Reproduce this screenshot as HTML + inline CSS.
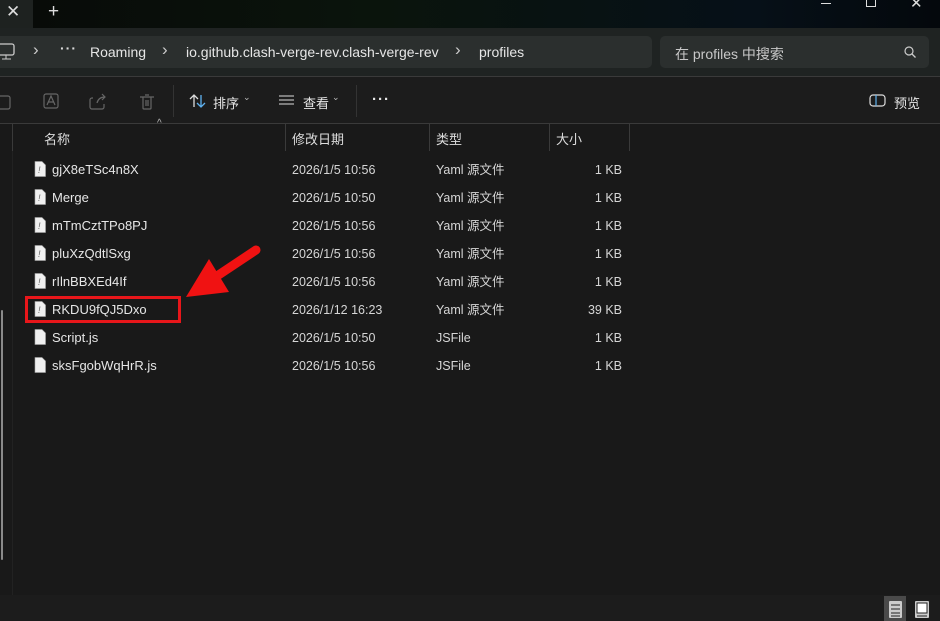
<!DOCTYPE html>
<html><head><meta charset="utf-8"><style>
*{margin:0;padding:0;box-sizing:border-box}
body{width:940px;height:621px;overflow:hidden;background:#191919;font-family:"Liberation Sans","Noto Sans CJK SC",sans-serif;color:#e6e6e6;position:relative;font-size:13px}
.abs{position:absolute}
.t{position:absolute;white-space:nowrap}
.ch{position:absolute;color:#ccc;font-size:17px;top:40px}
</style></head><body>
<!-- title bar -->
<div class="abs" style="left:0;top:0;width:940px;height:28px;background:linear-gradient(90deg,#080a08,#0a140c 40%,#061018 80%,#04080c)"></div>
<div class="abs" style="left:0;top:0;width:33px;height:28px;background:#1e2220"></div>
<div class="t" style="left:6px;top:2px;font-size:17px;color:#ddd">✕</div>
<div class="t" style="left:48px;top:1px;font-size:19px;color:#ddd">+</div>
<div class="abs" style="left:821px;top:3px;width:10px;height:1px;background:#ddd"></div>
<div class="abs" style="left:866px;top:0;width:10px;height:7px;border:1px solid #ddd;border-top:none"></div>
<div class="t" style="left:910px;top:-6px;font-size:15px;color:#ddd">✕</div>
<!-- address row -->
<div class="abs" style="left:0;top:28px;width:940px;height:48px;background:#1f2322"></div>
<div class="abs" style="left:0;top:36px;width:652px;height:32px;background:#2b2f2e;border-radius:0 5px 5px 0"></div>
<div class="abs" style="left:660px;top:36px;width:269px;height:32px;background:#2b2f2e;border-radius:5px"></div>
<svg class="abs" style="left:0;top:43px" width="16" height="18"><rect x="-3" y="1" width="17" height="11" rx="2" fill="none" stroke="#ccc" stroke-width="1.3"/><path d="M2 16h9M6 12v4" stroke="#ccc"/></svg>
<div class="ch" style="left:33px">›</div>
<div class="t" style="left:60px;top:40px;color:#ddd;font-size:14px;font-weight:bold;letter-spacing:1px">···</div>
<div class="t" style="left:90px;top:44px;font-size:14px">Roaming</div>
<div class="ch" style="left:162px">›</div>
<div class="t" style="left:186px;top:44px;font-size:14px">io.github.clash-verge-rev.clash-verge-rev</div>
<div class="ch" style="left:455px">›</div>
<div class="t" style="left:479px;top:44px;font-size:14px">profiles</div>
<div class="t" style="left:675px;top:44px;font-size:14px;color:#c8c8c8">在 profiles 中搜索</div>
<svg class="abs" style="left:903px;top:45px" width="14" height="14"><circle cx="6" cy="6" r="4" fill="none" stroke="#ccc" stroke-width="1.2"/><path d="M9 9l3.5 3.5" stroke="#ccc" stroke-width="1.3"/></svg>
<div class="abs" style="left:0;top:76px;width:940px;height:1px;background:#3a3a3a"></div>
<!-- toolbar -->
<div class="abs" style="left:0;top:77px;width:940px;height:46px;background:#1c1c1c"></div>
<svg class="abs" style="left:0;top:90px" width="170" height="22" stroke="#666" fill="none" stroke-width="1.2">
<rect x="-4" y="6" width="14" height="13" rx="2"/>
<rect x="44" y="4" width="14" height="14" rx="2"/><path d="M47 15l4-9 4 9M48 12h6"/>
<path d="M93 8h-1a2 2 0 0 0-2 2v7a2 2 0 0 0 2 2h10a2 2 0 0 0 2-2v-3M97 13c1-4 4-6 8-6M102 4l3 3-3 3"/>
<path d="M140 7h14M143 7v11a1 1 0 0 0 1 1h6a1 1 0 0 0 1-1V7M145 5h4M146 10v6M148 10v6"/>
</svg>
<div class="abs" style="left:173px;top:85px;width:1px;height:32px;background:#333"></div>
<svg class="abs" style="left:189px;top:92px" width="18" height="18" fill="none" stroke-width="1.3"><path d="M5 15V3M1 7l4-4 4 4" stroke="#ddd"/><path d="M12 3v12M8 11l4 4 4-4" stroke="#5fb2f0"/></svg>
<div class="t" style="left:213px;top:93px;font-size:13px">排序</div>
<div class="t" style="left:243px;top:92px;font-size:9px;color:#bbb">⌄</div>
<svg class="abs" style="left:278px;top:94px" width="18" height="14" stroke="#ddd"><path d="M1 2h15M1 6h15M1 10h15"/></svg>
<div class="t" style="left:303px;top:93px;font-size:13px">查看</div>
<div class="t" style="left:332px;top:92px;font-size:9px;color:#bbb">⌄</div>
<div class="abs" style="left:356px;top:85px;width:1px;height:32px;background:#333"></div>
<div class="t" style="left:372px;top:91px;font-size:15px;font-weight:bold;letter-spacing:1px">···</div>
<svg class="abs" style="left:869px;top:94px" width="18" height="14" fill="none" stroke="#ddd" stroke-width="1.2"><rect x="1" y="1" width="15" height="11" rx="3"/><path d="M7 1v11" stroke="#5fb2f0"/></svg>
<div class="t" style="left:894px;top:93px;font-size:13px">预览</div>
<div class="abs" style="left:0;top:123px;width:940px;height:1px;background:#3a3a3a"></div>
<!-- headers -->
<div class="abs" style="left:12px;top:124px;width:1px;height:27px;background:#3a3a3a"></div>
<div class="abs" style="left:285px;top:124px;width:1px;height:27px;background:#3a3a3a"></div>
<div class="abs" style="left:429px;top:124px;width:1px;height:27px;background:#3a3a3a"></div>
<div class="abs" style="left:549px;top:124px;width:1px;height:27px;background:#3a3a3a"></div>
<div class="abs" style="left:629px;top:124px;width:1px;height:27px;background:#3a3a3a"></div>
<div class="t" style="left:157px;top:118px;font-size:10px;color:#bbb">^</div>
<div class="t" style="left:44px;top:129px;font-size:13px;color:#ddd">名称</div>
<div class="t" style="left:292px;top:129px;font-size:13px;color:#ddd">修改日期</div>
<div class="t" style="left:436px;top:129px;font-size:13px;color:#ddd">类型</div>
<div class="t" style="left:556px;top:129px;font-size:13px;color:#ddd">大小</div>
<div class="abs" style="left:12px;top:151px;width:1px;height:444px;background:#222"></div>
<div class="abs" style="left:1px;top:310px;width:2px;height:250px;background:#8a8a8a;border-radius:1px"></div>
<!-- rows -->
<div id="rows"></div>
<script>
var r=[["gjX8eTSc4n8X","2026/1/5 10:56","Yaml 源文件","1 KB",1],["Merge","2026/1/5 10:50","Yaml 源文件","1 KB",1],["mTmCztTPo8PJ","2026/1/5 10:56","Yaml 源文件","1 KB",1],["pluXzQdtlSxg","2026/1/5 10:56","Yaml 源文件","1 KB",1],["rIlnBBXEd4If","2026/1/5 10:56","Yaml 源文件","1 KB",1],["RKDU9fQJ5Dxo","2026/1/12 16:23","Yaml 源文件","39 KB",1],["Script.js","2026/1/5 10:50","JSFile","1 KB",0],["sksFgobWqHrR.js","2026/1/5 10:56","JSFile","1 KB",0]];
var h="";r.forEach(function(x,i){var y=161+i*28;
h+='<svg class="abs" style="left:34px;top:'+y+'px" width="12" height="16"><path d="M1 0.5h7l3.5 3.5v11.5h-10.5z" fill="#f0f0f0" stroke="#aaa" stroke-width=".6"/>'+(x[4]?'<text x="4" y="12" font-size="9" font-style="italic" fill="#666" font-family="Liberation Sans">!</text>':'')+'</svg>';
var s='top:'+(y+1)+'px;font-size:12.5px;color:#d6d6d6;line-height:16px';
h+='<div class="t" style="left:52px;top:'+(y+1)+'px;line-height:16px">'+x[0]+'</div><div class="t" style="left:292px;'+s+'">'+x[1]+'</div><div class="t" style="left:436px;'+s+'">'+x[2]+'</div><div class="t" style="right:318px;'+s+'">'+x[3]+'</div>';});
document.getElementById("rows").innerHTML=h;
</script>
<!-- red highlight -->
<div class="abs" style="left:25px;top:296px;width:156px;height:27px;border:3px solid #e8161a"></div>
<svg class="abs" style="left:0;top:0" width="940" height="621"><path d="M256 250L214 278" stroke="#f01212" stroke-width="9" stroke-linecap="round"/><path d="M186 297L209 259L229 292Z" fill="#f01212"/></svg>
<!-- status bar -->
<div class="abs" style="left:0;top:595px;width:940px;height:26px;background:#1c1c1c"></div>
<div class="abs" style="left:884px;top:596px;width:22px;height:25px;background:#4a4a4a"></div>
<svg class="abs" style="left:888px;top:600px" width="50" height="20"><rect x="1" y="1" width="13" height="17" rx="1" fill="#ccc"/><path d="M3 5h9M3 9h9M3 13h9M3 16h9" stroke="#222"/><rect x="27" y="1" width="14" height="17" rx="1" fill="#ccc"/><rect x="29" y="3" width="10" height="10" fill="#fff" stroke="#222"/><path d="M29 16h10" stroke="#222"/></svg>
</body></html>
